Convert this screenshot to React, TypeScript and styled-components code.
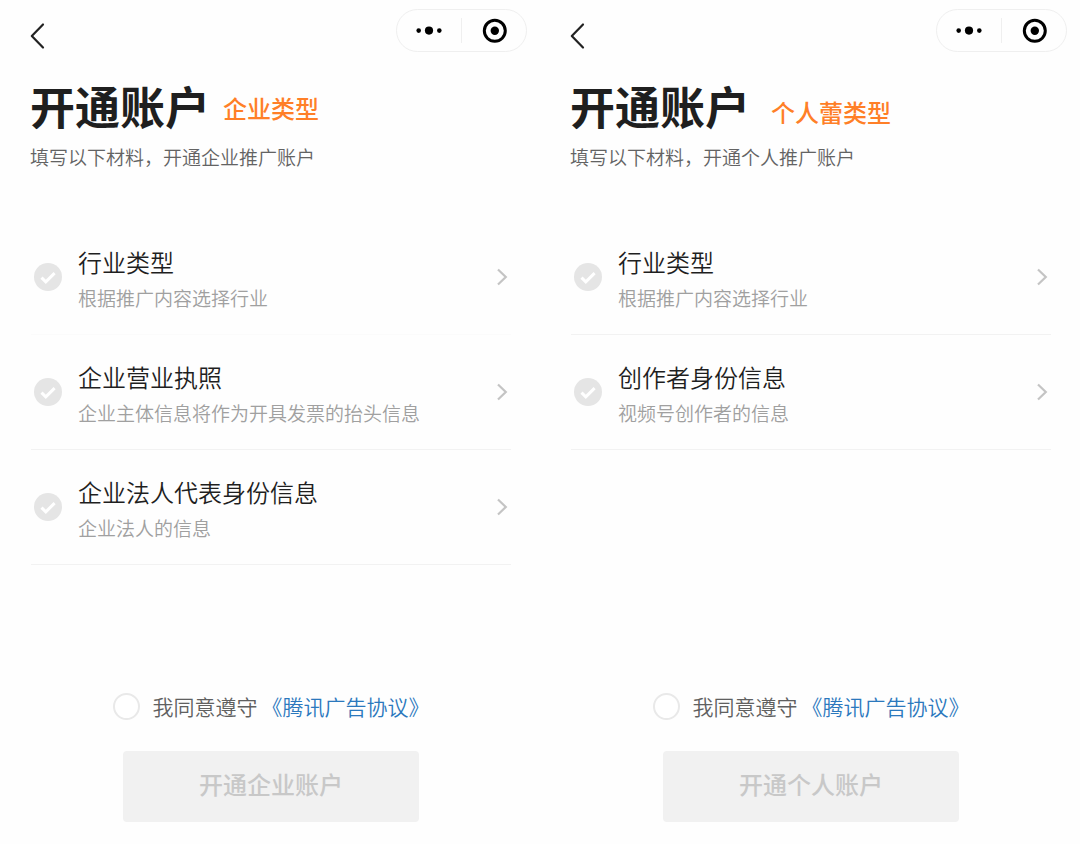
import React, { useId } from "react";
import styled, { createGlobalStyle } from "styled-components";

const GlobalStyle = createGlobalStyle`
  *, *::before, *::after { box-sizing: border-box; }
  body {
    margin: 0;
    background: #fefefe;
    color: #1f1f1f;
    font-family: "Noto Sans CJK SC", "Noto Sans", sans-serif;
    font-weight: 350;
  }
  button, input { font: inherit; color: inherit; margin: 0; }
`;

const Page = styled.div`
  display: grid;
  grid-template-columns: repeat(auto-fit, minmax(400px, 1fr));
`;

const Screen = styled.section`
  display: flex;
  flex-direction: column;
  min-height: 100vh;
  padding: 9px 0 22px;
`;

const TopBar = styled.header`
  display: flex;
  align-items: center;
  justify-content: space-between;
  padding: 0 13px 0 24px;
`;

const BackButton = styled.button`
  display: flex;
  margin-top: 10px;
  padding: 0;
  border: 0;
  background: none;
`;

const Capsule = styled.div`
  display: flex;
  align-items: center;
  width: 131px;
  height: 43px;
  border: 1px solid #efefef;
  border-radius: 22px;
`;

const CapsuleButton = styled.button`
  display: flex;
  flex: 1;
  align-items: center;
  justify-content: center;
  height: 25px;
  padding: 0;
  border: 0;
  background: none;

  & + & {
    border-left: 1px solid #efefef;
  }
`;

const Content = styled.div`
  display: flex;
  flex: 1;
  flex-direction: column;
  padding: 30px 28px 0 30px;
`;

const Heading = styled.div`
  display: flex;
  align-items: center;
`;

const Title = styled.h1`
  margin: 0;
  font-size: 45px;
  font-weight: 700;
  line-height: 48px;
`;

const Tag = styled.span<{ $lowered?: boolean }>`
  padding-top: ${(p) => (p.$lowered ? 12 : 4)}px;
  margin-left: ${(p) => (p.$lowered ? 21 : 13)}px;
  color: #ff7f27;
  font-size: 24px;
  font-weight: 500;
  line-height: 32px;
`;

const Subtitle = styled.p`
  margin: 14px 0 50px;
  color: #636363;
  font-size: 19px;
  line-height: 26px;
`;

const List = styled.ul`
  margin: 0;
  padding: 0 1px;
  list-style: none;
`;

const Item = styled.li<{ $faint?: boolean }>`
  border-bottom: 1px solid ${(p) => (p.$faint ? "#fbfbfb" : "#f2f2f2")};
`;

const ItemButton = styled.button`
  display: flex;
  align-items: center;
  width: 100%;
  height: 114px;
  padding: 0 3px;
  border: 0;
  background: none;
  text-align: left;
`;

const ItemText = styled.span`
  display: flex;
  flex: 1;
  flex-direction: column;
  gap: 5px;
  padding: 2px 12px 0 16px;
`;

const ItemTitle = styled.span`
  font-size: 24px;
  line-height: 34px;
`;

const ItemNote = styled.span`
  color: #a0a0a0;
  font-size: 19px;
  line-height: 28px;
`;

const Footer = styled.footer`
  display: flex;
  flex-direction: column;
  align-items: center;
  gap: 30px;
  margin-top: auto;
  padding-top: 32px;
`;

const Agreement = styled.div`
  display: flex;
  align-items: center;
  gap: 4px;
  font-size: 21px;
  line-height: 30px;
`;

const AgreeLabel = styled.label`
  display: flex;
  align-items: center;
  gap: 13px;
  color: #606060;
`;

const AgreeBox = styled.input`
  appearance: none;
  width: 27px;
  height: 27px;
  border: 2px solid #e9e9e9;
  border-radius: 50%;
  background: #fff;

  &:checked {
    border-color: #2b78bd;
    background: #2b78bd;
  }
`;

const AgreeLink = styled.a`
  color: #2b78bd;
  text-decoration: none;
`;

const SubmitButton = styled.button`
  width: 100%;
  max-width: 296px;
  height: 71px;
  padding: 0 0 6px;
  border: 0;
  border-radius: 4px;
  background: #f1f1f1;
  color: #c8c8c8;
  font-size: 24px;
  font-weight: 500;
`;

const BackIcon = () => (
  <svg width="28" height="28" viewBox="0 0 28 28" fill="none" aria-hidden="true">
    <path d="M19 2.5 7.8 14 19 25.5" stroke="#222" strokeWidth="2.2" strokeLinecap="round" strokeLinejoin="round" />
  </svg>
);

const MoreIcon = () => (
  <svg width="28" height="12" viewBox="0 0 28 12" aria-hidden="true">
    <circle cx="3.7" cy="5.6" r="2.3" />
    <circle cx="14" cy="5.6" r="4.1" />
    <circle cx="24.3" cy="5.6" r="2.3" />
  </svg>
);

const TargetIcon = () => (
  <svg width="26" height="26" viewBox="0 0 26 26" aria-hidden="true">
    <circle cx="13.8" cy="12.8" r="10.5" fill="none" stroke="#000" strokeWidth="3" />
    <circle cx="13.8" cy="12.8" r="4.2" />
  </svg>
);

const CheckIcon = () => (
  <svg width="28" height="28" viewBox="0 0 28 28" fill="none" aria-hidden="true">
    <circle cx="14" cy="14" r="14" fill="#e5e5e5" />
    <path d="m7.5 14.6 4.3 4.2 8.8-8.7" stroke="#fff" strokeWidth="3" />
  </svg>
);

const ChevronIcon = () => (
  <svg width="12" height="18" viewBox="0 0 12 18" fill="none" aria-hidden="true">
    <path d="m2 1.5 7.8 7.5L2 16.5" stroke="#c4c4c4" strokeWidth="2.2" />
  </svg>
);

type Entry = { title: string; note: string; faint?: boolean };

type AccountProps = {
  tag: string;
  lowered?: boolean;
  subtitle: string;
  entries: Entry[];
  submit: string;
};

function AccountScreen({ tag, lowered, subtitle, entries, submit }: AccountProps) {
  const agreeId = useId();
  return (
    <Screen>
      <TopBar>
        <BackButton type="button" aria-label="返回">
          <BackIcon />
        </BackButton>
        <Capsule>
          <CapsuleButton type="button" aria-label="更多">
            <MoreIcon />
          </CapsuleButton>
          <CapsuleButton type="button" aria-label="关闭">
            <TargetIcon />
          </CapsuleButton>
        </Capsule>
      </TopBar>
      <Content>
        <Heading>
          <Title>开通账户</Title>
          <Tag $lowered={lowered}>{tag}</Tag>
        </Heading>
        <Subtitle>{subtitle}</Subtitle>
        <List>
          {entries.map((entry) => (
            <Item key={entry.title} $faint={entry.faint}>
              <ItemButton type="button">
                <CheckIcon />
                <ItemText>
                  <ItemTitle>{entry.title}</ItemTitle>
                  <ItemNote>{entry.note}</ItemNote>
                </ItemText>
                <ChevronIcon />
              </ItemButton>
            </Item>
          ))}
        </List>
        <Footer>
          <Agreement>
            <AgreeLabel htmlFor={agreeId}>
              <AgreeBox id={agreeId} type="checkbox" />
              我同意遵守
            </AgreeLabel>
            <AgreeLink href="#agreement">《腾讯广告协议》</AgreeLink>
          </Agreement>
          <SubmitButton type="button" disabled>
            {submit}
          </SubmitButton>
        </Footer>
      </Content>
    </Screen>
  );
}

export default function App() {
  return (
    <>
      <GlobalStyle />
      <Page>
        <AccountScreen
          tag="企业类型"
          subtitle="填写以下材料，开通企业推广账户"
          entries={[
            { title: "行业类型", note: "根据推广内容选择行业", faint: true },
            { title: "企业营业执照", note: "企业主体信息将作为开具发票的抬头信息" },
            { title: "企业法人代表身份信息", note: "企业法人的信息" },
          ]}
          submit="开通企业账户"
        />
        <AccountScreen
          tag="个人蕾类型"
          lowered
          subtitle="填写以下材料，开通个人推广账户"
          entries={[
            { title: "行业类型", note: "根据推广内容选择行业" },
            { title: "创作者身份信息", note: "视频号创作者的信息" },
          ]}
          submit="开通个人账户"
        />
      </Page>
    </>
  );
}
